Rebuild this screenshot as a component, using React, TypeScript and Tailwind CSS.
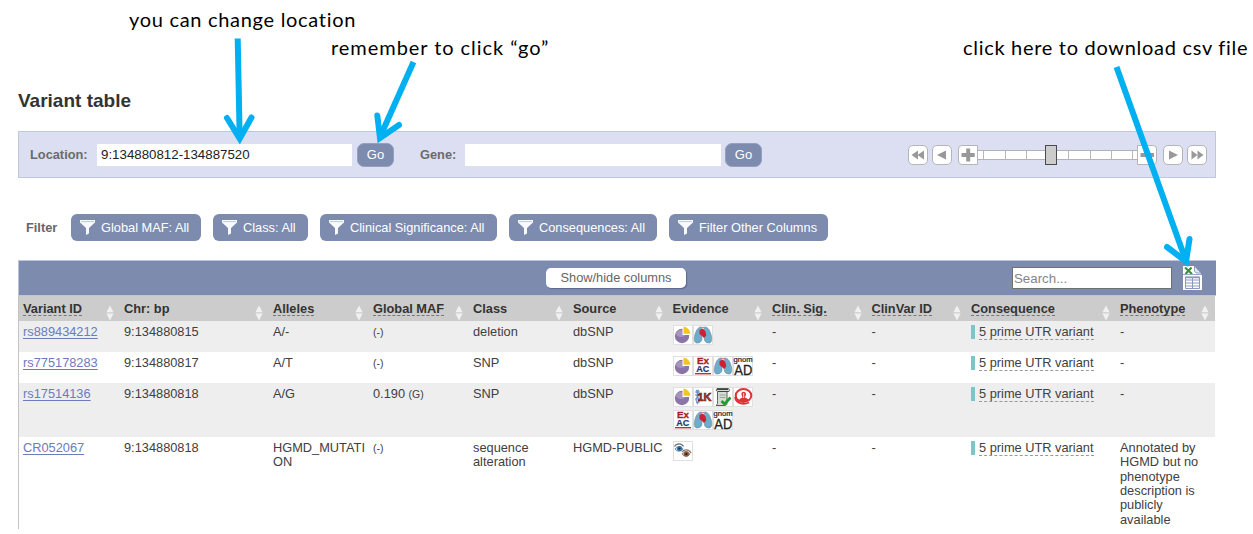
import type { ReactNode } from "react";

type EvidenceKind = "freq" | "pheno" | "exac" | "gnomad" | "kg" | "cited" | "esp" | "hgmd";

const columns: { label: string; hint?: boolean }[] = [
  { label: "Variant ID", hint: true },
  { label: "Chr: bp" },
  { label: "Alleles", hint: true },
  { label: "Global MAF", hint: true },
  { label: "Class" },
  { label: "Source" },
  { label: "Evidence" },
  { label: "Clin. Sig.", hint: true },
  { label: "ClinVar ID", hint: true },
  { label: "Consequence", hint: true },
  { label: "Phenotype", hint: true },
];

const GRID =
  "grid grid-cols-[101px_149px_100px_100px_100px_99.5px_99.5px_99.5px_99.5px_149px_1fr]";

const rows: {
  id: string;
  pos: string;
  alleles: string;
  maf?: string;
  mafAllele: string;
  cls: string;
  source: string;
  evidence: EvidenceKind[];
  phenotype: string;
  style: string;
}[] = [
  { id: "rs889434212", pos: "9:134880815", alleles: "A/-", mafAllele: "(-)", cls: "deletion", source: "dbSNP", evidence: ["freq", "pheno"], phenotype: "-", style: "h-[31px] bg-[#eeeeee]" },
  { id: "rs775178283", pos: "9:134880817", alleles: "A/T", mafAllele: "(-)", cls: "SNP", source: "dbSNP", evidence: ["freq", "exac", "pheno", "gnomad"], phenotype: "-", style: "h-[31px] bg-white" },
  { id: "rs17514136", pos: "9:134880818", alleles: "A/G", maf: "0.190", mafAllele: "(G)", cls: "SNP", source: "dbSNP", evidence: ["freq", "kg", "cited", "esp", "exac", "pheno", "gnomad"], phenotype: "-", style: "h-[54px] bg-[#eeeeee]" },
  { id: "CR052067", pos: "9:134880818", alleles: "HGMD_MUTATION", mafAllele: "(-)", cls: "sequence alteration", source: "HGMD-PUBLIC", evidence: ["hgmd"], phenotype: "Annotated by HGMD but no phenotype description is publicly available", style: "h-[92px] bg-white" },
];

function EvidenceArt({ kind }: { kind: EvidenceKind }) {
  switch (kind) {
    case "freq":
      return (
        <>
          <circle cx="9" cy="11" r="7.2" fill="#8a74a8" />
          <ellipse cx="8" cy="8.5" rx="5" ry="3.5" fill="#a594bd" />
          <path d="M9.5 10V0.8H19V10z" fill="#fff" />
          <path d="M10.5 8.800V1.500a8 8 0 0 1 7 7.300z" fill="#f2c522" />
        </>
      );
    case "pheno":
      return (
        <>
          <path d="M8.400 2C5 1.500 2.600 6 1.500 11.500c-.8 4 .3 6.500 2.500 6.500 3 0 4.800-1.500 5-4z" fill="#6dacca" stroke="#6f8797" strokeWidth=".6" />
          <path d="M11.500 2c3.500-.5 5.900 4 7 9.500.8 4-.3 6.500-2.500 6.500-3 0-4.500-1.500-4.700-4z" fill="#6dacca" stroke="#6f8797" strokeWidth=".6" />
          <path d="M6.500 5L10 3.500l2.500 3 .8 4-2.300 2.500-2-2-2.500-2z" fill="#cf1f35" />
          <path d="M8 2.500h3.500" stroke="#d8818c" strokeWidth="1.200" />
        </>
      );
    case "exac":
      return (
        <>
          <text x="10" y="8" textAnchor="middle" textLength="12" lengthAdjust="spacingAndGlyphs" fontSize="8.500" fontWeight="bold" fill="#a12325" stroke="#a12325" strokeWidth=".3">Ex</text>
          <text x="9.800" y="15.800" textAnchor="middle" textLength="13" lengthAdjust="spacingAndGlyphs" fontSize="8.500" fontWeight="bold" fill="#1d3a70" stroke="#1d3a70" strokeWidth=".2">AC</text>
          <path d="M2 17.700h16" stroke="#b13436" strokeWidth="1.400" />
        </>
      );
    case "gnomad":
      return (
        <>
          <text x="10" y="5.500" textAnchor="middle" textLength="19" lengthAdjust="spacingAndGlyphs" fontSize="6.800" fill="#222" stroke="#222" strokeWidth=".2">gnom</text>
          <text x="10.300" y="18.500" textAnchor="middle" textLength="18" lengthAdjust="spacingAndGlyphs" fontSize="14" fill="#222" stroke="#222" strokeWidth=".3">AD</text>
        </>
      );
    case "kg":
      return (
        <>
          <path d="M3 3c5 2 0 4 1 6s4 3 0 8M6 3c-5 2 0 4-1 6s-4 3 0 8" fill="none" stroke="#6d91c4" strokeWidth="1.300" />
          <path d="M2 5h5M2 8h5M2 12h5M3 15h4" stroke="#6d91c4" />
          <text x="11.500" y="14" textAnchor="middle" textLength="14" lengthAdjust="spacingAndGlyphs" fontSize="10.500" fontWeight="bold" fill="#d73529" stroke="#5e1711" strokeWidth=".6">1K</text>
        </>
      );
    case "cited":
      return (
        <>
          <path d="M4 1.500h11c1.500 0 2 2 1 3h-2V16c0 2-1 2.500-2.500 2.500H3c2-1 1.500-3 1.500-5V4.500C3 4 3 2 4 1.500z" fill="#d5ddd4" stroke="#5a625a" />
          <path d="M4 2.300h11M5 4.500h10" stroke="#3e453e" strokeWidth="1.200" />
          <path d="M6.500 8h6M6.500 10.500h6" stroke="#8d988d" strokeWidth=".8" />
          <path d="M8.500 14l3 3 6-6.500" fill="none" stroke="#249b2d" strokeWidth="2.700" />
        </>
      );
    case "esp":
      return (
        <>
          <ellipse cx="10.500" cy="8.500" rx="7.800" ry="6.500" fill="#fff" stroke="#df3035" strokeWidth="2" />
          <path d="M8.500 7.500c-1-3.500 5-4 4.500 0-.2 1.500-1 2-1 3l3 1.500v2H6.500v-2l3-1.500z" fill="#df3035" />
          <path d="M2 10c1 6 8 8.500 14 5.500" fill="none" stroke="#df3035" strokeWidth="1.800" />
          <path d="M10.700 6v5" stroke="#fff" strokeWidth=".9" />
        </>
      );
    case "hgmd":
      return (
        <>
          <path d="M1.500 5.500c2-3.500 7-3.500 9 0" fill="none" stroke="#6c6a68" strokeWidth="1.200" />
          <path d="M2 8c2-3.500 6-3.500 8 0-2 3-6 3-8 0z" fill="#c4d9ec" stroke="#405c78" strokeWidth=".6" />
          <circle cx="6.500" cy="7.500" r="2.600" fill="#3779b4" />
          <circle cx="6.500" cy="7.500" r="1.100" fill="#152b43" />
          <path d="M9 11c2-3 7-3 9 1" fill="none" stroke="#8d786a" strokeWidth="1.200" />
          <path d="M9 13c2-3.500 6-3.500 8 0-2 3-6 3-8 0z" fill="#d9c4b2" stroke="#69503f" strokeWidth=".6" />
          <circle cx="13.300" cy="13" r="2.600" fill="#87583a" />
          <circle cx="13.300" cy="13" r="1.100" fill="#2c1a12" />
        </>
      );
  }
}

function EvidenceIcon({ kind }: { kind: EvidenceKind }) {
  return (
    <svg viewBox="0 0 20 20" className="h-[20px] w-[20px] shrink-0 bg-white" fontFamily="Liberation Sans, sans-serif">
      <rect x=".5" y=".5" width="19" height="19" fill="#fff" stroke="#e0e0e0" />
      <EvidenceArt kind={kind} />
    </svg>
  );
}

function GoButton() {
  return (
    <button className="h-[24px] w-[37px] rounded-[7px] border border-[#93a0c2] bg-[#7c8bae] text-[13px] leading-none text-white">
      Go
    </button>
  );
}

function FilterButton({ label, width }: { label: string; width: string }) {
  return (
    <button className={`flex h-[27px] items-center rounded-[6px] bg-[#7c8bae] pl-[9px] text-white ${width}`}>
      <svg viewBox="0 0 15 17" className="mr-[6px] h-[17px] w-[15px] shrink-0">
        <path d="M0 1h15v2.500L9 9v5.500L6 16V9L0 3.500z" fill="#f8faff" />
        <path d="M1 2.600h13" stroke="#b9c3d9" strokeWidth=".9" />
      </svg>
      <span className="whitespace-nowrap">{label}</span>
    </button>
  );
}

function NavButton({ children, shape = "rounded-[5px]" }: { children: ReactNode; shape?: string }) {
  return (
    <button className={`h-[20px] w-[20px] shrink-0 border border-[#b5b5b5] bg-white ${shape}`}>
      <svg viewBox="0 0 18 18" className="h-[18px] w-[18px]" fill="#999999">
        {children}
      </svg>
    </button>
  );
}

function RegionSlider() {
  return (
    <div className="flex h-[20px] items-center">
      <NavButton><path d="M9 4.500v9L2.500 9zM15 4.500v9L8.500 9z" /></NavButton>
      <div className="w-1" />
      <NavButton><path d="M13 4.500v9L4 9z" /></NavButton>
      <div className="w-[6px]" />
      <NavButton shape="rounded-l-[4px]"><path d="M7.200 2.500h4v4.500h4.500v4h-4.500v4.500h-4V11H2.500V7h4.700z" /></NavButton>
      <div className="relative grid h-[10px] w-[159px] grid-cols-[6px_22px_21px_21px_21px_22px_21px_21px_4px] border-y border-[#b3b3b3] bg-white">
        {[0, 1, 2, 3, 4, 5, 6, 7].map((n) => (
          <div key={n} className="border-r border-[#b8b8b8]" />
        ))}
        <div className="absolute top-[-6px] left-[67px] h-[20px] w-[12px] border border-[#4a4a4a] bg-[#cccccc]" />
      </div>
      <NavButton shape="rounded-r-[4px]"><path d="M2.500 7h13.500v4H2.500z" /></NavButton>
      <div className="w-[6px]" />
      <NavButton><path d="M5 4.500v9L14 9z" /></NavButton>
      <div className="w-1" />
      <NavButton><path d="M3.500 4.500v9L9.500 9zM9.500 4.500v9L15.500 9z" /></NavButton>
    </div>
  );
}

function SortIcon() {
  return (
    <svg viewBox="0 0 8 16" className="mt-[9px] mr-[6px] h-[16px] w-[8px] shrink-0" fill="#f1f1f1">
      <path d="M4 .5L7.600 7.200H.4zM4 15.500L.4 8.500h7.200z" />
    </svg>
  );
}

function ExportIcon() {
  return (
    <svg viewBox="0 0 19 25" className="h-[25px] w-[19px]">
      <path d="M0 0h11l7 7v2h1v15H0z" fill="#fff" />
      <path d="M11.500 0L18 7h-5l-1.500-2z" fill="#dfe5f4" stroke="#7c8bae" strokeWidth=".8" />
      <path d="M2 1.500L9 8M8.500 1.500L2.500 8" stroke="#36913d" strokeWidth="2.100" />
      <path d="M2.500 11h14v11.500h-14zM2.500 14h14M2.500 17h14M2.500 20h14M9.500 11v11.500" fill="none" stroke="#8c9aba" />
      <path d="M2.500 11.500h6.500M10 11.500h6.500" stroke="#8c9aba" strokeWidth="1.500" />
      <path d="M0 8.500h18" stroke="#9aa7c5" />
    </svg>
  );
}

function Notes() {
  return (
    <div className="pointer-events-none absolute inset-0 font-[Lato,sans-serif] text-[20px] leading-6 whitespace-nowrap text-black">
      <div className="absolute top-[7px] left-[129px] tracking-[0.7px]">you can change location</div>
      <div className="absolute top-[35px] left-[331px] tracking-[0.95px]">remember to click “go”</div>
      <div className="absolute top-[35px] left-[963px] tracking-[0.7px]">click here to download csv file</div>
      <svg viewBox="0 0 1253 534" className="absolute inset-0 h-[534px] w-[1253px]" fill="none" stroke="#00b0f0" strokeWidth="6">
        <path d="M237.700 38.500L239.700 139" />
        <path d="M227 118L239.700 138.500L251.500 117.500" strokeLinecap="round" />
        <path d="M413.500 62L380 137" />
        <path d="M377.300 115.500L380 138L399 125" strokeLinecap="round" />
        <path d="M1116.500 67L1186 261" />
        <path d="M1167 247L1186 261.500L1189.500 239" strokeLinecap="round" />
      </svg>
    </div>
  );
}

export default function App() {
  return (
    <main className="relative h-[534px] w-[1253px] overflow-hidden bg-white pt-[89px] pl-[18px] font-['Liberation_Sans',Arial,sans-serif] text-[12.8px] text-[#404040]">
      <h1 className="h-[42px] text-[19px] leading-6 font-bold text-[#333333]">Variant table</h1>

      <section className="flex h-[47px] w-[1198px] items-center border border-[#bfc7dc] bg-[#dbdff1] pl-[11px]">
        <label className="w-[67px] text-[12.8px] font-bold text-[#6b6b6b]">Location:</label>
        <input className="mr-[5px] h-[22px] w-[255px] bg-white pl-1 text-[13.3px] text-[#222222]" defaultValue="9:134880812-134887520" />
        <GoButton />
        <label className="ml-[26px] w-[45px] text-[12.8px] font-bold text-[#6b6b6b]">Gene:</label>
        <input className="mr-1 h-[22px] w-[256px] bg-white pl-1 text-[13.3px]" />
        <GoButton />
        <div className="mr-[8px] ml-auto">
          <RegionSlider />
        </div>
      </section>

      <section className="mt-[36px] flex h-[27px] items-center gap-3">
        <span className="mr-[-12px] w-[53px] pl-[8px] text-[12.8px] font-bold text-[#666666]">Filter</span>
        <FilterButton label="Global MAF: All" width="w-[130px]" />
        <FilterButton label="Class: All" width="w-[95px]" />
        <FilterButton label="Clinical Significance: All" width="w-[177px]" />
        <FilterButton label="Consequences: All" width="w-[148px]" />
        <FilterButton label="Filter Other Columns" width="w-[159px]" />
      </section>

      <section className="mt-[19px] w-[1198px]">
        <div className="flex h-[36px] items-center border-t border-b border-l border-[#bcc5dc] bg-[#7c8bae] pl-[527px]">
          <button className="h-[20px] w-[140px] rounded-[5px] bg-white text-[12.8px] leading-none text-[#666666] shadow-[1px_1px_1px_#59668a]">
            Show/hide columns
          </button>
          <input
            className="ml-auto h-[22px] w-[160px] border border-[#707070] bg-white pl-px text-[13.3px] placeholder:text-[#858585]"
            placeholder="Search..."
          />
          <div className="mr-[14px] ml-[11px]">
            <ExportIcon />
          </div>
        </div>
        <div className="w-[1197px] border-l border-[#c4c4c4]">
          <div className={`h-[25px] bg-[#cccccc] font-bold text-[#333333] ${GRID}`}>
            {columns.map((column) => (
              <div key={column.label} className="flex items-start justify-between pl-1">
                <span className={`mt-[5px] h-[15px] text-[12.8px] leading-[15px] whitespace-nowrap ${column.hint ? "border-b border-dashed border-[#777777]" : ""}`}>
                  {column.label}
                </span>
                <SortIcon />
              </div>
            ))}
          </div>
          {rows.map((row) => (
            <div key={row.id} className={`leading-[14.35px] *:pt-[4px] *:pl-1 ${GRID} ${row.style}`}>
              <div><a className="text-[#6b7bbd] underline underline-offset-2">{row.id}</a></div>
              <div>{row.pos}</div>
              <div className="break-all">{row.alleles}</div>
              <div>
                {row.maf && <span>{row.maf} </span>}
                <span className="text-[10.5px]">{row.mafAllele}</span>
              </div>
              <div>{row.cls}</div>
              <div className="whitespace-nowrap">{row.source}</div>
              <div className="flex flex-wrap content-start gap-y-[3px]">
                {row.evidence.map((kind) => (
                  <EvidenceIcon key={kind} kind={kind} />
                ))}
              </div>
              <div>-</div>
              <div>-</div>
              <div className="flex">
                <span className="mr-1 h-[14px] w-1 bg-[#7fc4c9]" />
                <span className="h-[15px] border-b border-dashed border-[#999999] whitespace-nowrap">5 prime UTR variant</span>
              </div>
              <div>{row.phenotype}</div>
            </div>
          ))}
        </div>
      </section>
      <Notes />
    </main>
  );
}
